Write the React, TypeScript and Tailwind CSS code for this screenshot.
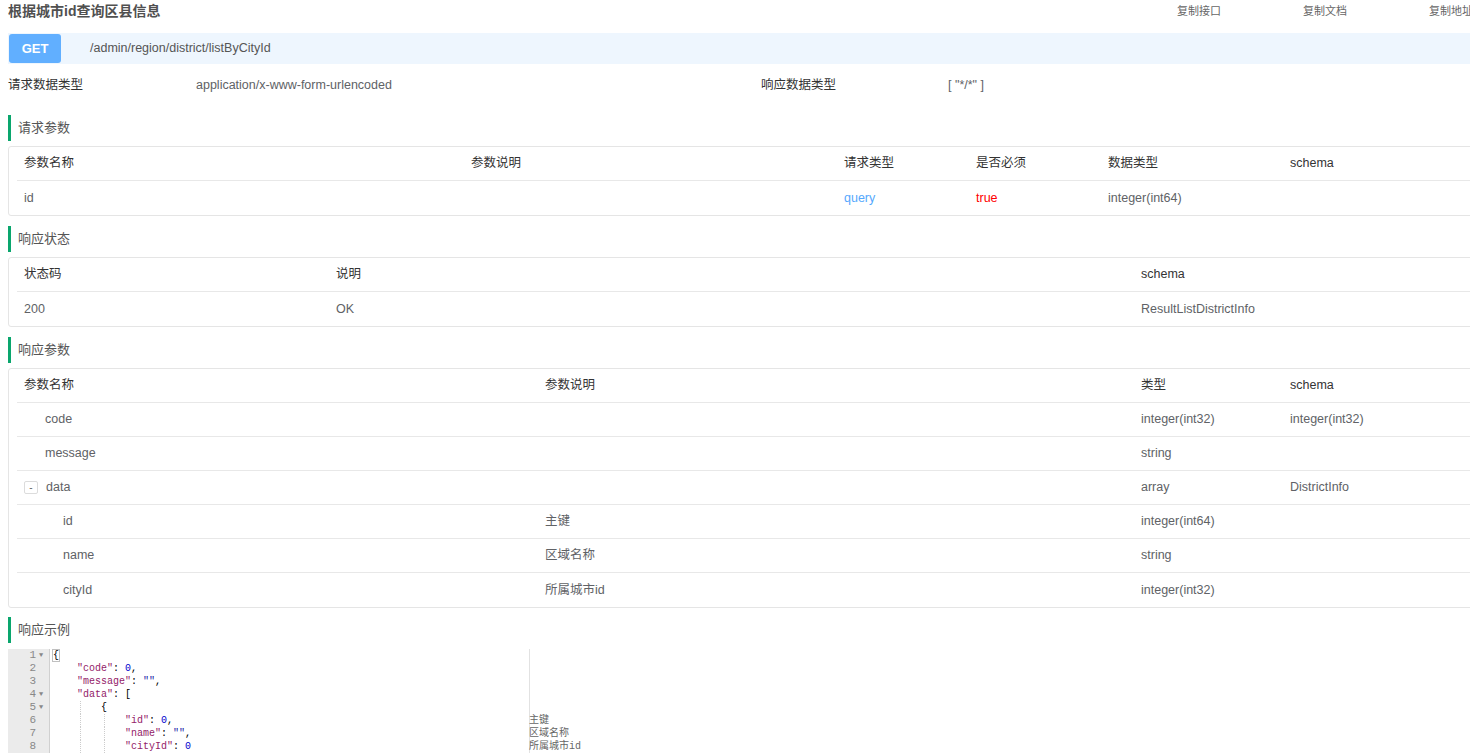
import React from "react";

const font = "font-['Liberation_Sans','Noto_Sans_CJK_SC',sans-serif]";
const mono = "font-['Liberation_Mono','Noto_Sans_CJK_SC',monospace]";

const SectionTitle = ({ title, className = "" }: { title: string; className?: string }) => (
  <div className={`flex h-[26px] items-center border-l-[3px] border-[#0aa66d] pl-[7px] text-[13px] text-[#555] ${className}`}>
    {title}
  </div>
);

const Row = ({ cols, cells, header }: { cols: string; cells: React.ReactNode[]; header?: boolean }) => (
  <div className={`grid h-[34px] items-center border-b border-[#e8e8e8] last:border-b-0 ${cols} ${header ? "text-[#333]" : "text-[#606266]"}`}>
    {cells.map((c, i) => (
      <div key={i} className="truncate px-[7px]">
        {c}
      </div>
    ))}
  </div>
);

const Table = ({ cols, header, rows }: { cols: string; header: string[]; rows: React.ReactNode[][] }) => (
  <div className="rounded-[3px] border border-[#e5e5e5] px-2 text-[12.5px]">
    <Row cols={cols} cells={header} header />
    {rows.map((r, i) => (
      <Row key={i} cols={cols} cells={r} />
    ))}
  </div>
);

const codeLines: { n: number; fold?: boolean; content: React.ReactNode; guides?: number; note?: string }[] = [
  {
    n: 1,
    fold: true,
    content: <span className="outline outline-1 outline-[#c0c0c0]">{"{"}</span>,
  },
  {
    n: 2,
    content: (
      <>
        {"    "}
        <span className="text-[#931a68]">"code"</span>: <span className="text-[#0000cd]">0</span>,
      </>
    ),
  },
  {
    n: 3,
    content: (
      <>
        {"    "}
        <span className="text-[#931a68]">"message"</span>: <span className="text-[#1a1aa6]">""</span>,
      </>
    ),
  },
  {
    n: 4,
    fold: true,
    content: (
      <>
        {"    "}
        <span className="text-[#931a68]">"data"</span>: [
      </>
    ),
  },
  { n: 5, fold: true, guides: 1, content: <>{"        {"}</> },
  {
    n: 6,
    guides: 2,
    note: "主键",
    content: (
      <>
        {"            "}
        <span className="text-[#931a68]">"id"</span>: <span className="text-[#0000cd]">0</span>,
      </>
    ),
  },
  {
    n: 7,
    guides: 2,
    note: "区域名称",
    content: (
      <>
        {"            "}
        <span className="text-[#931a68]">"name"</span>: <span className="text-[#1a1aa6]">""</span>,
      </>
    ),
  },
  {
    n: 8,
    guides: 2,
    note: "所属城市id",
    content: (
      <>
        {"            "}
        <span className="text-[#931a68]">"cityId"</span>: <span className="text-[#0000cd]">0</span>
      </>
    ),
  },
];

const CodeEditor = () => (
  <div className={`mt-[6px] flex ${mono} text-[10px] leading-[13px]`}>
    <div className="w-[42px] shrink-0 border-r border-[#d0d0d0] bg-[#ebebeb] text-[11px] text-[#888]">
      {codeLines.map((l) => (
        <div key={l.n} className="flex h-[13px] items-center justify-end pr-[3px]">
          <span>{l.n}</span>
          <span className="ml-[3px] w-[7px] text-[7px]">{l.fold ? "▼" : ""}</span>
        </div>
      ))}
    </div>
    <div className="relative w-[1000px] pl-[3px] text-black">
      <div className="absolute top-0 bottom-0 left-[479px] w-px bg-[#e2e2e2]" />
      {codeLines.map((l) => (
        <div key={l.n} className="relative flex h-[13px] items-center whitespace-pre">
          {l.guides && l.guides >= 1 ? (
            <span className="absolute top-0 bottom-0 left-[27px] border-l border-dotted border-[#ccc]" />
          ) : null}
          {l.guides && l.guides >= 2 ? (
            <span className="absolute top-0 bottom-0 left-[51px] border-l border-dotted border-[#ccc]" />
          ) : null}
          <span className="w-[476px] shrink-0">{l.content}</span>
          {l.note ? <span className="text-[#666]">{l.note}</span> : null}
        </div>
      ))}
    </div>
  </div>
);

export default function App() {
  return (
    <div className={`h-screen w-full overflow-hidden bg-white ${font}`}>
      <div className="w-[1490px] px-2">
        <div className="flex h-[22px] items-center justify-between">
          <div className="text-[14px] font-bold text-[#505050]">根据城市id查询区县信息</div>
          <div className="flex gap-[82px] pr-[9px] text-[11px] text-[#666]">
            <span>复制接口</span>
            <span>复制文档</span>
            <span>复制地址</span>
          </div>
        </div>

        <div className="mt-[11px] flex h-[31px] items-center bg-[#eef6fe]">
          <div className="ml-px flex h-[29px] w-[52px] items-center justify-center rounded-[3px] bg-[#61afff] text-[13px] font-bold text-white">
            GET
          </div>
          <div className="ml-[29px] text-[12.5px] text-[#555]">/admin/region/district/listByCityId</div>
        </div>

        <div className="flex h-[42px] items-center text-[12.5px]">
          <div className="w-[188px] text-[#333]">请求数据类型</div>
          <div className="w-[565px] text-[#606266]">application/x-www-form-urlencoded</div>
          <div className="w-[187px] text-[#333]">响应数据类型</div>
          <div className="text-[#606266]">[ "*/*" ]</div>
        </div>

        <SectionTitle title="请求参数" className="mt-[9px] mb-[5px]" />
        <Table
          cols="grid-cols-[447px_373px_132px_132px_182px_1fr]"
          header={["参数名称", "参数说明", "请求类型", "是否必须", "数据类型", "schema"]}
          rows={[
            [
              "id",
              "",
              <span className="text-[#55a8fd]">query</span>,
              <span className="text-[#ff0000]">true</span>,
              "integer(int64)",
              "",
            ],
          ]}
        />

        <SectionTitle title="响应状态" className="mt-[10px] mb-[5px]" />
        <Table
          cols="grid-cols-[312px_805px_1fr]"
          header={["状态码", "说明", "schema"]}
          rows={[["200", "OK", "ResultListDistrictInfo"]]}
        />

        <SectionTitle title="响应参数" className="mt-[10px] mb-[5px]" />
        <Table
          cols="grid-cols-[521px_596px_149px_1fr]"
          header={["参数名称", "参数说明", "类型", "schema"]}
          rows={[
            [<span className="pl-[21px]">code</span>, "", "integer(int32)", "integer(int32)"],
            [<span className="pl-[21px]">message</span>, "", "string", ""],
            [
              <span className="flex items-center">
                <span className="mr-[8px] flex h-[13px] w-[14px] items-center justify-center rounded-[2px] border border-[#dcdcdc] text-[10px] leading-none text-[#666]">
                  -
                </span>
                data
              </span>,
              "",
              "array",
              "DistrictInfo",
            ],
            [<span className="pl-[39px]">id</span>, "主键", "integer(int64)", ""],
            [<span className="pl-[39px]">name</span>, "区域名称", "string", ""],
            [<span className="pl-[39px]">cityId</span>, "所属城市id", "integer(int32)", ""],
          ]}
        />

        <SectionTitle title="响应示例" className="mt-[9px]" />
        <CodeEditor />
      </div>
    </div>
  );
}
